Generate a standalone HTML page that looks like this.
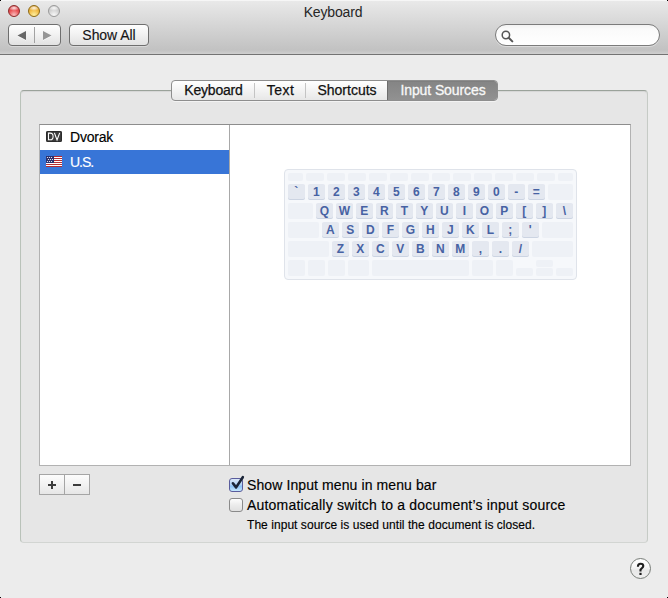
<!DOCTYPE html>
<html><head><meta charset="utf-8">
<style>
*{margin:0;padding:0;box-sizing:border-box}
html,body{width:668px;height:598px;overflow:hidden;background:#ececec;font-family:"Liberation Sans",sans-serif;color:#000}
.abs{position:absolute}
#tb{position:absolute;left:0;top:0;width:668px;height:55px;background:linear-gradient(#eaeaea 0,#e3e3e3 8px,#c2c2c2 50px,#c8c8c8 52px,#d0d0d0 54px);border-bottom:1px solid #737373}
#tb:before{content:"";position:absolute;left:0;top:0;right:0;height:1px;background:#f6f6f6}
.light{position:absolute;top:5px;width:12px;height:12px;border-radius:50%}
#title{position:absolute;left:-1px;top:3.5px;width:668px;text-align:center;font-size:14px;letter-spacing:-0.15px;color:#262626}
.btn{position:absolute;height:22px;top:24px;border:1px solid #6e6e6e;border-radius:4px;background:linear-gradient(#fefefe,#f1f1f1 50%,#e2e2e2);box-shadow:0 1px 0 rgba(255,255,255,.35)}
#search{position:absolute;left:495px;top:24px;width:165px;height:22px;border:1px solid #7b7b7b;border-radius:11px;background:linear-gradient(#f2f2f2,#fafafa 4px,#fff);box-shadow:0 1px 0 rgba(255,255,255,.4)}
#group{position:absolute;left:20px;top:90px;width:628px;height:453px;border:1px solid #b9c2b9;border-top-color:#9aa29a;border-right-color:#c6cbc6;border-bottom-color:#d2d5d2;border-radius:4px;background:#e6e6e6;box-shadow:inset 0 1px 1px rgba(0,0,0,.07)}
#tabs{position:absolute;left:171px;top:80px;width:327px;height:21px;border:1px solid #8e8e8e;border-radius:4px;background:linear-gradient(#ffffff,#f3f3f3 50%,#e7e7e7);overflow:hidden;box-shadow:0 1px 0 rgba(255,255,255,.5)}
.tab{position:absolute;top:0;height:19px;font-size:14px;line-height:19px;text-align:center;color:#111;-webkit-text-stroke:0.25px #111}
.sep{position:absolute;top:2px;width:1px;height:15px;background:#c4c4c4}
#list{position:absolute;left:39px;top:124px;width:592px;height:342px;background:#fff;border:1px solid #b2b2b2;border-top-color:#8d8d8d}
#divider{position:absolute;left:229px;top:125px;width:1px;height:340px;background:#a8a8a8}
#sel{position:absolute;left:40px;top:150px;width:189px;height:24px;background:#3875d7}
.row{position:absolute;left:70px;font-size:14px;-webkit-text-stroke:0.15px currentColor}
#kb{position:absolute;left:284px;top:169px;width:293px;height:111px;border:1px solid #dfe3ea;border-radius:4px;background:#f6f8fb}
.e,.k{position:absolute;border-radius:2px;background:#eef1f6}
.k{background:#e4e8f0;box-shadow:0 1px 0 #ccd4e2;color:#4762a3;font-weight:bold;font-size:12px;text-align:center;line-height:16px}
#pm{position:absolute;left:39px;top:474px;width:51px;height:21px;border:1px solid #a5a5a5;background:linear-gradient(#fcfcfc,#f2f2f2 50%,#e6e6e6)}
.cb{position:absolute;left:229px;width:14px;height:14px;border:1px solid #8a8a8a;border-radius:3px;background:linear-gradient(#fdfdfd,#ececec 50%,#e0e0e0)}
.lbl{position:absolute;left:247px;font-size:14px;letter-spacing:0.1px;color:#000;-webkit-text-stroke:0.15px #000}
#help{position:absolute;left:630px;top:558px;width:21px;height:21px;border:1px solid #787d78;border-radius:50%;background:linear-gradient(#ffffff,#f8f8f8 40%,#e8e8e8 60%,#efefef);font-size:15.5px;font-weight:bold;text-align:center;line-height:20px;color:#222}
</style></head><body>
<div id="tb"></div>
<div class="light" style="left:8px;background:radial-gradient(ellipse 55% 28% at 50% 20%,rgba(255,255,255,.9),rgba(255,255,255,0)),radial-gradient(circle at 50% 90%,#f9c0c0 0,#ea5558 50%,#c8282e 100%);border:1px solid #8c2a2a"></div>
<div class="light" style="left:28px;background:radial-gradient(ellipse 55% 28% at 50% 20%,rgba(255,255,255,.9),rgba(255,255,255,0)),radial-gradient(circle at 50% 90%,#fdf0a0 0,#f2bd48 50%,#d08a18 100%);border:1px solid #8d6a14"></div>
<div class="light" style="left:48px;background:radial-gradient(ellipse 55% 28% at 50% 20%,rgba(255,255,255,.9),rgba(255,255,255,0)),radial-gradient(circle at 50% 90%,#f8f8f8 0,#d4d4d4 50%,#b8b8b8 100%);border:1px solid #9a9a9a"></div>
<div id="title">Keyboard</div>
<div class="btn" style="left:8px;width:53px"></div>
<div class="abs" style="left:34px;top:27px;width:1px;height:16px;background:#a2a2a2"></div>
<svg class="abs" style="left:0;top:0" width="70" height="55"><path d="M17.5 36.3 L26 31.8 L26 40.8 Z" fill="#fff" opacity=".8"/><path d="M43 31.8 L51.5 36.3 L43 40.8 Z" fill="#fff" opacity=".8"/><path d="M17.5 35.5 L26 31 L26 40 Z" fill="#666"/><path d="M43 31 L51.5 35.5 L43 40 Z" fill="#959595"/></svg>
<div class="btn" style="left:69px;width:80px;font-size:14px;line-height:20px;text-align:center;color:#161616;-webkit-text-stroke:0.15px #161616;letter-spacing:-0.05px">Show All</div>
<div id="search"><svg class="abs" style="left:5px;top:5px" width="14" height="13"><circle cx="4.9" cy="5" r="3.7" fill="none" stroke="#555" stroke-width="1.5"/><path d="M7.7 7.8 L11.3 11.4" stroke="#555" stroke-width="2" stroke-linecap="round"/></svg></div>

<div id="group"></div>
<div id="tabs">
  <div class="tab" style="left:0;width:83px;letter-spacing:-0.2px">Keyboard</div>
  <div class="sep" style="left:82px"></div>
  <div class="tab" style="left:83px;width:51px;letter-spacing:0.45px">Text</div>
  <div class="sep" style="left:133px"></div>
  <div class="tab" style="left:134px;width:82px;letter-spacing:0px">Shortcuts</div>
  <div class="tab" style="left:215px;width:111px;top:-1px;height:21px;line-height:21px;background:linear-gradient(#6e6e6e 0,#858585 2px,#8c8c8c 60%,#929292);color:#f8f8f8;-webkit-text-stroke:0.3px #f8f8f8;border-left:1px solid #6d6d6d;letter-spacing:-0.1px">Input Sources</div>
</div>
<div id="list"></div>
<div id="divider"></div>
<div id="sel"></div>
<svg class="abs" style="left:46px;top:131px" width="16" height="11" viewBox="0 0 16 11"><rect x="0.5" y="0.5" width="15" height="10" rx="0.6" fill="#3c3c3c" stroke="#2a2a2a"/><path d="M2.5 2.1 V8.8 H4.1 Q7.1 8.8 7.1 5.45 Q7.1 2.1 4.1 2.1 Z" fill="none" stroke="#fff" stroke-width="1.05"/><path d="M8.4 1.9 L11.05 8.9 L13.7 1.9" fill="none" stroke="#fff" stroke-width="1.1"/></svg>
<div class="row" style="top:129px;letter-spacing:-0.2px">Dvorak</div>
<svg class="abs" style="left:46px;top:156px" width="16" height="11" viewBox="0 0 16 11"><rect width="16" height="11" fill="#fff"/><rect y="0" width="16" height="1" fill="#b42a30"/><rect y="2" width="16" height="1" fill="#b42a30"/><rect y="4" width="16" height="1" fill="#b42a30"/><rect y="6" width="16" height="1" fill="#b42a30"/><rect y="8" width="16" height="1" fill="#b42a30"/><rect y="10" width="16" height="1" fill="#b42a30"/><rect width="8" height="7" fill="#2c2f6c"/><circle cx="1.5" cy="1.5" r="0.62" fill="#fff"/><circle cx="3.5" cy="1.5" r="0.62" fill="#fff"/><circle cx="5.5" cy="1.5" r="0.62" fill="#fff"/><circle cx="2.5" cy="3.5" r="0.62" fill="#fff"/><circle cx="4.5" cy="3.5" r="0.62" fill="#fff"/><circle cx="6.5" cy="3.5" r="0.62" fill="#fff"/><circle cx="1.5" cy="5.5" r="0.62" fill="#fff"/><circle cx="3.5" cy="5.5" r="0.62" fill="#fff"/><circle cx="5.5" cy="5.5" r="0.62" fill="#fff"/></svg>
<div class="row" style="top:154px;color:#fff;letter-spacing:-1px">U.S.</div>

<div id="kb">
<div class="e" style="left:3.0px;top:3.0px;width:15.0px;height:7.5px"></div>
<div class="e" style="left:21.0px;top:3.0px;width:17.6px;height:7.5px"></div>
<div class="e" style="left:42.0px;top:3.0px;width:17.6px;height:7.5px"></div>
<div class="e" style="left:63.0px;top:3.0px;width:17.6px;height:7.5px"></div>
<div class="e" style="left:84.0px;top:3.0px;width:17.6px;height:7.5px"></div>
<div class="e" style="left:105.0px;top:3.0px;width:17.6px;height:7.5px"></div>
<div class="e" style="left:126.0px;top:3.0px;width:17.6px;height:7.5px"></div>
<div class="e" style="left:147.0px;top:3.0px;width:17.6px;height:7.5px"></div>
<div class="e" style="left:168.0px;top:3.0px;width:17.6px;height:7.5px"></div>
<div class="e" style="left:189.0px;top:3.0px;width:17.6px;height:7.5px"></div>
<div class="e" style="left:210.0px;top:3.0px;width:17.6px;height:7.5px"></div>
<div class="e" style="left:231.0px;top:3.0px;width:17.6px;height:7.5px"></div>
<div class="e" style="left:252.0px;top:3.0px;width:17.6px;height:7.5px"></div>
<div class="e" style="left:273.0px;top:3.0px;width:14.7px;height:7.5px"></div>
<div class="k" style="left:3.0px;top:14.0px;width:16.6px;height:14.9px">`</div>
<div class="k" style="left:23.0px;top:14.0px;width:16.6px;height:14.9px">1</div>
<div class="k" style="left:43.0px;top:14.0px;width:16.6px;height:14.9px">2</div>
<div class="k" style="left:63.0px;top:14.0px;width:16.6px;height:14.9px">3</div>
<div class="k" style="left:83.0px;top:14.0px;width:16.6px;height:14.9px">4</div>
<div class="k" style="left:103.0px;top:14.0px;width:16.6px;height:14.9px">5</div>
<div class="k" style="left:123.0px;top:14.0px;width:16.6px;height:14.9px">6</div>
<div class="k" style="left:143.0px;top:14.0px;width:16.6px;height:14.9px">7</div>
<div class="k" style="left:163.0px;top:14.0px;width:16.6px;height:14.9px">8</div>
<div class="k" style="left:183.0px;top:14.0px;width:16.6px;height:14.9px">9</div>
<div class="k" style="left:203.0px;top:14.0px;width:16.6px;height:14.9px">0</div>
<div class="k" style="left:223.0px;top:14.0px;width:16.6px;height:14.9px">-</div>
<div class="k" style="left:243.0px;top:14.0px;width:16.6px;height:14.9px">=</div>
<div class="e" style="left:263.0px;top:14.0px;width:24.7px;height:15.6px"></div>
<div class="e" style="left:3.0px;top:33.0px;width:24.6px;height:15.6px"></div>
<div class="k" style="left:31.0px;top:33.0px;width:16.6px;height:14.9px">Q</div>
<div class="k" style="left:51.0px;top:33.0px;width:16.6px;height:14.9px">W</div>
<div class="k" style="left:71.0px;top:33.0px;width:16.6px;height:14.9px">E</div>
<div class="k" style="left:91.0px;top:33.0px;width:16.6px;height:14.9px">R</div>
<div class="k" style="left:111.0px;top:33.0px;width:16.6px;height:14.9px">T</div>
<div class="k" style="left:131.0px;top:33.0px;width:16.6px;height:14.9px">Y</div>
<div class="k" style="left:151.0px;top:33.0px;width:16.6px;height:14.9px">U</div>
<div class="k" style="left:171.0px;top:33.0px;width:16.6px;height:14.9px">I</div>
<div class="k" style="left:191.0px;top:33.0px;width:16.6px;height:14.9px">O</div>
<div class="k" style="left:211.0px;top:33.0px;width:16.6px;height:14.9px">P</div>
<div class="k" style="left:231.0px;top:33.0px;width:16.6px;height:14.9px">[</div>
<div class="k" style="left:251.0px;top:33.0px;width:16.6px;height:14.9px">]</div>
<div class="k" style="left:271.0px;top:33.0px;width:16.6px;height:14.9px">\</div>
<div class="e" style="left:3.0px;top:52.0px;width:30.6px;height:15.6px"></div>
<div class="k" style="left:37.0px;top:52.0px;width:16.6px;height:14.9px">A</div>
<div class="k" style="left:57.0px;top:52.0px;width:16.6px;height:14.9px">S</div>
<div class="k" style="left:77.0px;top:52.0px;width:16.6px;height:14.9px">D</div>
<div class="k" style="left:97.0px;top:52.0px;width:16.6px;height:14.9px">F</div>
<div class="k" style="left:117.0px;top:52.0px;width:16.6px;height:14.9px">G</div>
<div class="k" style="left:137.0px;top:52.0px;width:16.6px;height:14.9px">H</div>
<div class="k" style="left:157.0px;top:52.0px;width:16.6px;height:14.9px">J</div>
<div class="k" style="left:177.0px;top:52.0px;width:16.6px;height:14.9px">K</div>
<div class="k" style="left:197.0px;top:52.0px;width:16.6px;height:14.9px">L</div>
<div class="k" style="left:217.0px;top:52.0px;width:16.6px;height:14.9px">;</div>
<div class="k" style="left:237.0px;top:52.0px;width:16.6px;height:14.9px">'</div>
<div class="e" style="left:257.0px;top:52.0px;width:30.7px;height:15.6px"></div>
<div class="e" style="left:3.0px;top:71.0px;width:40.6px;height:15.6px"></div>
<div class="k" style="left:47.0px;top:71.0px;width:16.6px;height:14.9px">Z</div>
<div class="k" style="left:67.0px;top:71.0px;width:16.6px;height:14.9px">X</div>
<div class="k" style="left:87.0px;top:71.0px;width:16.6px;height:14.9px">C</div>
<div class="k" style="left:107.0px;top:71.0px;width:16.6px;height:14.9px">V</div>
<div class="k" style="left:127.0px;top:71.0px;width:16.6px;height:14.9px">B</div>
<div class="k" style="left:147.0px;top:71.0px;width:16.6px;height:14.9px">N</div>
<div class="k" style="left:167.0px;top:71.0px;width:16.6px;height:14.9px">M</div>
<div class="k" style="left:187.0px;top:71.0px;width:16.6px;height:14.9px">,</div>
<div class="k" style="left:207.0px;top:71.0px;width:16.6px;height:14.9px">.</div>
<div class="k" style="left:227.0px;top:71.0px;width:16.6px;height:14.9px">/</div>
<div class="e" style="left:247.0px;top:71.0px;width:40.8px;height:15.6px"></div>
<div class="e" style="left:3.0px;top:90.0px;width:16.6px;height:15.6px"></div>
<div class="e" style="left:23.0px;top:90.0px;width:16.6px;height:15.6px"></div>
<div class="e" style="left:43.0px;top:90.0px;width:16.6px;height:15.6px"></div>
<div class="e" style="left:63.0px;top:90.0px;width:20.6px;height:15.6px"></div>
<div class="e" style="left:87.0px;top:90.0px;width:96.8px;height:15.6px"></div>
<div class="e" style="left:187.0px;top:90.0px;width:20.7px;height:15.6px"></div>
<div class="e" style="left:211.0px;top:90.0px;width:16.7px;height:15.6px"></div>
<div class="e" style="left:231.0px;top:98.0px;width:16.7px;height:7.6px"></div>
<div class="e" style="left:251.0px;top:90.0px;width:16.9px;height:7.4px"></div>
<div class="e" style="left:251.0px;top:98.0px;width:16.9px;height:7.6px"></div>
<div class="e" style="left:271.0px;top:98.0px;width:16.8px;height:7.6px"></div>
</div>

<div id="pm"></div>
<div class="abs" style="left:64px;top:475px;width:1px;height:19px;background:#a5a5a5"></div>
<div class="abs" style="left:48px;top:484px;width:8px;height:2px;background:#3c3c3c"></div>
<div class="abs" style="left:51px;top:481px;width:2px;height:8px;background:#3c3c3c"></div>
<div class="abs" style="left:73px;top:484px;width:8px;height:2px;background:#3c3c3c"></div>

<div class="cb" style="top:478px;border-color:#5a5c9c;background:linear-gradient(#dce9f9,#b4d4f6 45%,#8cc2f7 60%,#c6e8fd)"></div>
<svg class="abs" style="left:228px;top:474px" width="18" height="18"><path d="M4.9 9.3 L8.1 13.4 L14.8 3.2" fill="none" stroke="#1a2538" stroke-width="2.6" stroke-linecap="round" stroke-linejoin="round"/></svg>
<div class="lbl" style="top:477px">Show Input menu in menu bar</div>
<div class="cb" style="top:498px"></div>
<div class="lbl" style="top:497px;letter-spacing:0.2px">Automatically switch to a document’s input source</div>
<div class="lbl" style="top:518px;font-size:12px;letter-spacing:0.05px">The input source is used until the document is closed.</div>

<div id="help"></div>
<svg class="abs" style="left:620px;top:550px" width="40" height="40" viewBox="620 550 40 40"><path d="M637.9 566.8 C637.9 564.4 639.1 563.7 640.6 563.7 C642.3 563.7 643.3 564.7 643.3 566.1 C643.3 567.8 641.2 568.3 640.5 569.8 L640.5 571.4" fill="none" stroke="#1e1e1e" stroke-width="2.1"/><rect x="639.4" y="572.8" width="2.2" height="2.2" fill="#1e1e1e"/></svg>
<div class="abs" style="left:0;top:0;width:1px;height:1px;background:#000"></div>
<div class="abs" style="left:667px;top:0;width:1px;height:1px;background:#000"></div>
<div class="abs" style="left:0;top:597px;width:1px;height:1px;background:#000"></div>
<div class="abs" style="left:667px;top:597px;width:1px;height:1px;background:#000"></div>
</body></html>
